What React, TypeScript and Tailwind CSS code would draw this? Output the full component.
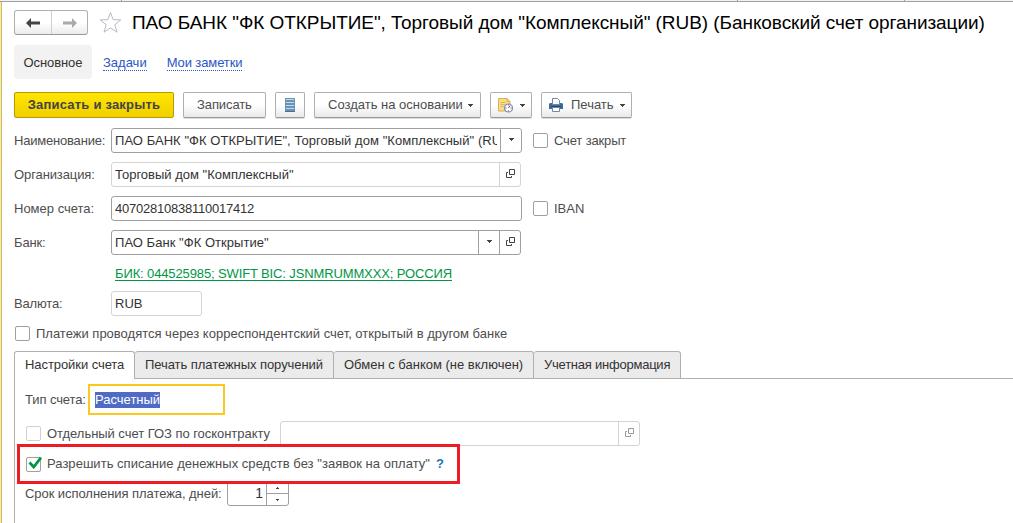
import type { ReactNode } from "react";

const CaretDown = ({ className = "" }: { className?: string }) => (
  <svg width="5" height="3" viewBox="0 0 5 3" className={className} fill="#444">
    <path d="M0 0h5v1H4v1H3v1H2V2H1V1H0z" />
  </svg>
);

const SpinArrow = ({ className = "" }: { className?: string }) => (
  <svg width="3" height="2" viewBox="0 0 3 2" className={className} fill="#444">
    <path d="M0 0h3v1H2v1H1V1H0z" />
  </svg>
);

const OpenIcon = ({ color = "#444" }: { color?: string }) => (
  <svg width="9" height="9" viewBox="0 0 9 9" fill="none" stroke={color}>
    <path d="M3.5 .5h5v5h-5z" />
    <path d="M2 3.5H.5v5h5V7" />
  </svg>
);

const Checkbox = ({ checked = false, light = false }: { checked?: boolean; light?: boolean }) => (
  <span
    className={`flex h-[15px] w-[15px] shrink-0 rounded-xs border bg-white ${light ? "border-[#d0d0d0]" : "border-[#a0a0a0]"}`}
  >
    {checked && (
      <svg width="14" height="13" viewBox="0 0 14 13" fill="none" className="-mt-[2px] ml-px shrink-0">
        <path d="M1.5 6.5l4.200 4.500L13 1.500" stroke="#009646" strokeWidth="2.800" />
      </svg>
    )}
  </span>
);

const Button = ({ className = "", children }: { className?: string; children?: ReactNode }) => (
  <button
    type="button"
    className={`flex h-[26px] items-center rounded-xs border border-[#b0b0b0] border-b-[#999] bg-linear-to-b from-white from-50% to-[#e9e9e9] shadow-[0_1px_0_#ddd] ${className}`}
  >
    {children}
  </button>
);

const Field = ({
  className = "",
  light = false,
  children,
}: {
  className?: string;
  light?: boolean;
  children?: ReactNode;
}) => (
  <div
    className={`flex h-[25px] shrink-0 overflow-hidden rounded-[3px] border bg-white text-[#333] ${light ? "border-[#d4d4d4]" : "border-[#a0a0a0]"} ${className}`}
  >
    {children}
  </div>
);

const FieldButton = ({ light = false, children }: { light?: boolean; children?: ReactNode }) => (
  <span
    className={`flex w-[21px] shrink-0 items-center justify-center border-l pb-0.5 ${light ? "border-[#d4d4d4]" : "border-[#a0a0a0]"}`}
  >
    {children}
  </span>
);

const Value = ({ className = "", children }: { className?: string; children?: ReactNode }) => (
  <span className={`ml-[3px] min-w-0 flex-1 overflow-hidden leading-[23px] ${className}`}>{children}</span>
);

const Label = ({ className = "", children }: { className?: string; children?: ReactNode }) => (
  <span className={`w-[97px] shrink-0 ${className}`}>{children}</span>
);

const Tab = ({ className = "", children }: { className?: string; children?: ReactNode }) => (
  <div className={`h-7 rounded-t-[3px] border-t border-r border-[#b0b0b0] pl-2.5 leading-[26px] text-[#333] ${className}`}>
    {children}
  </div>
);

const App = () => {
  return (
    <div className="flex h-[523px] w-[1013px] flex-col overflow-hidden bg-white font-['Liberation_Sans',Arial,sans-serif] text-[13px] leading-4 whitespace-nowrap text-[#4d4d4d]">
      <div className="flex h-0.5 shrink-0 border-b border-[#a0a0a0] bg-[#f2f2f2]">
        <div className="w-[122px] border-r border-[#a0a0a0]" />
        <div className="w-[616px] border-r border-[#a0a0a0]" />
        <div className="w-[167px] border-r border-[#a0a0a0]" />
      </div>
      <div className="flex flex-1 border-l border-[#fbeb9e]">
        <div className="flex flex-1 flex-col border-l border-[#cdbb6c] pl-3">
          <div className="mt-2 flex h-[25px] shrink-0 items-center">
            <div className="flex h-[25px] w-[74px] rounded-[3px] border border-[#b0b0b0] border-b-[#999] bg-linear-to-b from-white from-50% to-[#ececec]">
              <span className="flex w-[37px] items-center justify-center border-r border-[#d0d0d0]">
                <svg width="14" height="10" viewBox="0 0 14 10" fill="#444">
                  <path d="M0 5L5 0v3.500h9v3H5V10z" />
                </svg>
              </span>
              <span className="flex flex-1 items-center justify-center">
                <svg width="14" height="10" viewBox="0 0 14 10" fill="#aaa">
                  <path d="M14 5L9 0v3.500H0v3h9V10z" />
                </svg>
              </span>
            </div>
            <svg width="24" height="23" viewBox="0 0 24 23" fill="none" stroke="#b4b9c2" className="ml-[10px]">
              <path d="M12.500 1.500l2.700 7.200 7.600.2-6 4.800 2.200 7.500-6.500-4.300-6.500 4.300 2.200-7.500-6-4.800 7.600-.2z" />
            </svg>
            <h1 className="ml-[10px] text-[19px] leading-6 tracking-[-0.06px] text-black">
              ПАО БАНК "ФК ОТКРЫТИЕ", Торговый дом "Комплексный" (RUB) (Банковский счет организации)
            </h1>
          </div>

          <div className="mt-2.5 flex h-[34px] shrink-0 items-center">
            <span className="flex h-[34px] w-[78px] items-center justify-center rounded-sm bg-[#f2f2f2] pt-0.5 tracking-[-0.1px] text-[#333]">
              Основное
            </span>
            <span className="mt-0.5 ml-[11px] border-b border-dotted border-[#2a56c6] leading-[14px] text-[#2a56c6]">
              Задачи
            </span>
            <span className="mt-0.5 ml-5 border-b border-dotted border-[#2a56c6] leading-[14px] tracking-[-0.1px] text-[#2a56c6]">
              Мои заметки
            </span>
          </div>

          <div className="mt-[13px] flex shrink-0 gap-[9px]">
            <button
              type="button"
              className="h-[26px] w-40 rounded-xs border border-[#b89a00] bg-linear-to-b from-[#ffe600] to-[#f0cf00] font-bold tracking-[0.21px] text-[#444]"
            >
              Записать и закрыть
            </button>
            <Button className="w-[83px] pl-[13px] tracking-[-0.1px]">Записать</Button>
            <Button className="w-[30px] justify-center">
              <svg width="10" height="14" viewBox="0 0 10 14">
                <path fill="#6c93b3" d="M0 0h10v14H0z" />
                <path stroke="#c4dbea" d="M1 1.500h8M1 4.500h8M1 7.500h8M1 10.500h8" />
                <path stroke="#4b7192" d="M0 13.500h10" />
              </svg>
            </Button>
            <Button className="w-[167px] pl-[13px]">
              <span>Создать на основании</span>
              <CaretDown className="ml-[5px]" />
            </Button>
            <Button className="w-[42px] pl-[7px]">
              <svg width="15" height="15" viewBox="0 0 15 15" fill="none">
                <path d="M.5 .5h8.500l3 3v9.500H.5z" fill="#f7dd8a" stroke="#d9b04a" />
                <path d="M9 .5v3h3" stroke="#d9b04a" />
                <path d="M2.500 4.500h5M2.500 6.500h5M2.500 8.500h3" stroke="#d9b866" />
                <circle cx="10.500" cy="10" r="4" fill="#fff" stroke="#6a95bd" strokeWidth="1.200" />
                <path d="M10.500 10l1.500-2.500M10.500 10v0" stroke="#3b6690" />
                <path d="M10 7h1M10 13h1M7.500 10h1M12.500 10h1" stroke="#d22" />
              </svg>
              <CaretDown className="ml-[7px]" />
            </Button>
            <Button className="w-[91px] pl-[7px]">
              <svg width="14" height="14" viewBox="0 0 14 14">
                <path fill="#3d6c98" d="M1 5h12l1 1v5H0V6z" />
                <path fill="#234a70" d="M2 8h10v1H2z" />
                <path fill="#fff" stroke="#7189a0" d="M3.500 .5h5l2 2V6.500h-7zM3.500 9.500h7v4h-7z" />
              </svg>
              <span className="ml-2">Печать</span>
              <CaretDown className="ml-[6px]" />
            </Button>
          </div>

          <div className="mt-2.5 flex shrink-0 flex-col gap-[9px]">
            <div className="flex items-center">
              <Label className="tracking-[-0.2px]">Наименование:</Label>
              <Field className="w-[411px]">
                <Value className="mr-[3px] tracking-[0.05px]">
                  ПАО БАНК "ФК ОТКРЫТИЕ", Торговый дом "Комплексный" (RUB)
                </Value>
                <FieldButton>
                  <CaretDown />
                </FieldButton>
              </Field>
              <span className="ml-[11px] flex items-center gap-1.5 tracking-[-0.15px]">
                <Checkbox />
                Счет закрыт
              </span>
            </div>
            <div className="flex items-center">
              <Label className="tracking-[-0.1px]">Организация:</Label>
              <Field light className="w-[410px]">
                <Value>Торговый дом "Комплексный"</Value>
                <FieldButton light>
                  <OpenIcon />
                </FieldButton>
              </Field>
            </div>
            <div className="flex items-center">
              <Label>Номер счета:</Label>
              <Field className="w-[411px]">
                <Value className="tracking-[-0.23px]">40702810838110017412</Value>
              </Field>
              <span className="ml-[11px] flex items-center gap-1.5">
                <Checkbox />
                IBAN
              </span>
            </div>
            <div className="flex items-center">
              <Label className="tracking-[-0.15px]">Банк:</Label>
              <Field className="w-[410px]">
                <Value className="tracking-[0.04px]">ПАО Банк "ФК Открытие"</Value>
                <FieldButton>
                  <CaretDown />
                </FieldButton>
                <FieldButton>
                  <OpenIcon />
                </FieldButton>
              </Field>
            </div>
          </div>

          <div className="mt-[11px] ml-[101px] h-[15px] shrink-0 tracking-[-0.125px] text-[#009646]">
            <span className="underline underline-offset-2 [text-decoration-skip-ink:none]">
              БИК: 044525985; SWIFT BIC: JSNMRUMMXXX; РОССИЯ
            </span>
          </div>
          <div className="mt-2.5 flex shrink-0 items-center">
            <Label className="tracking-[-0.15px]">Валюта:</Label>
            <Field light className="w-[91px]">
              <Value>RUB</Value>
            </Field>
          </div>
          <div className="mt-2.5 ml-px flex h-[15px] shrink-0 items-center gap-1.5">
            <Checkbox />
            <span>Платежи проводятся через корреспондентский счет, открытый в другом банке</span>
          </div>

          <div className="mt-2.5 flex shrink-0">
            <Tab className="w-[121px] border-l tracking-[-0.07px]">Настройки счета</Tab>
            <Tab className="w-[199px] border-b bg-[#ebebeb] tracking-[-0.06px]">Печать платежных поручений</Tab>
            <Tab className="w-[200px] border-b bg-[#ebebeb]">Обмен с банком (не включен)</Tab>
            <Tab className="w-[147px] border-b bg-[#ebebeb] tracking-[-0.23px]">Учетная информация</Tab>
            <div className="flex-1 border-b border-[#b0b0b0]" />
          </div>

          <div className="flex flex-1 flex-col border-l border-[#b0b0b0] pl-2.5">
            <div className="mt-[5px] flex h-[31px] shrink-0 items-center">
              <span className="w-[63px] tracking-[-0.1px]">Тип счета:</span>
              <div className="flex h-[31px] w-[137px] items-center border-2 border-[#fbc81e] pl-[5px]">
                <span className="bg-[#4f6bc4] text-white">Расчетный</span>
              </div>
            </div>
            <div className="mt-1.5 ml-px flex shrink-0 items-center">
              <Checkbox light />
              <span className="ml-1.5 w-[233px] tracking-[-0.04px]">Отдельный счет ГОЗ по госконтракту</span>
              <Field light className="w-[360px]">
                <Value />
                <FieldButton light>
                  <OpenIcon color="#999" />
                </FieldButton>
              </Field>
            </div>
            <div className="relative z-10 -mt-0.5 -ml-2 flex h-10 w-[443px] shrink-0 items-center border-3 border-[#ee1b22] bg-white pl-1.5">
              <Checkbox checked />
              <span className="ml-1.5 tracking-[0.03px]">
                Разрешить списание денежных средств без "заявок на оплату"
              </span>
              <span className="ml-1.5 font-bold text-[#1a76b8]">?</span>
            </div>
            <div className="-mt-[3px] flex shrink-0 items-center">
              <span className="w-[202px] tracking-[-0.06px]">Срок исполнения платежа, дней:</span>
              <Field className="w-[62px]">
                <span className="flex-1 pr-[3px] text-right text-sm leading-[23px]">1</span>
                <span className="flex w-[22px] flex-col border-l border-[#a0a0a0]">
                  <span className="flex h-3 items-center justify-center border-b border-[#a0a0a0]">
                    <SpinArrow className="rotate-180" />
                  </span>
                  <span className="flex flex-1 items-center justify-center">
                    <SpinArrow />
                  </span>
                </span>
              </Field>
            </div>
          </div>
        </div>
      </div>
    </div>
  );
};

export default App;
